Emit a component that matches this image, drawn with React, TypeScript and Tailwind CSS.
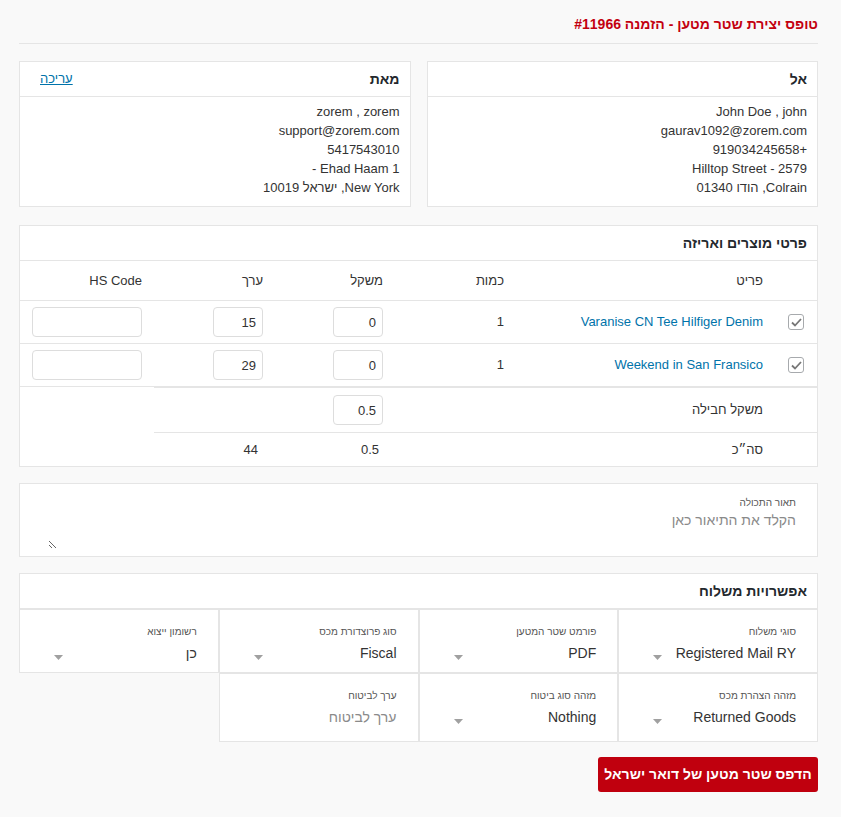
import React from 'react';

const Caret = () => (
  <svg width="9" height="5" viewBox="0 0 9 5" className="block">
    <path d="M0 0h9L4.5 5z" fill="#a0a0a0" />
  </svg>
);

const Check = () => (
  <span className="flex h-[16px] w-[16px] items-center justify-center rounded-[3px] border border-[#a7aaad] bg-white">
    <svg width="11" height="9" viewBox="0 0 11 9">
      <path d="M1 4.5l3 3L10 1" fill="none" stroke="#777" strokeWidth="1.8" />
    </svg>
  </span>
);

const Field = ({ value, className }: { value: string; className: string }) => (
  <input
    readOnly
    value={value}
    className={`h-[30px] rounded-[4px] border border-[#dddddd] bg-white pr-[6px] text-right text-[13px] text-[#333] outline-none ${className}`}
  />
);

const AddressCard = ({ title, lines, edit }: { title: string; lines: string[]; edit?: boolean }) => (
  <div className="border border-[#e5e5e5] bg-white">
    <div className="flex h-[35px] items-center justify-between border-b border-[#e5e5e5] pl-[20px] pr-[10px]">
      <span className="text-[14px] font-bold text-[#23282d]">{title}</span>
      {edit && <a className="text-[13px] text-[#0073aa] underline">עריכה</a>}
    </div>
    <div className="pb-[9px] pr-[10px] pt-[5px] text-[13px] leading-[19px] text-[#333]">
      {lines.map((l) => (
        <div key={l}>{l}</div>
      ))}
    </div>
  </div>
);

const OptionCell = ({
  label,
  value,
  placeholder = false,
  caret = true,
  tall = false,
}: {
  label: string;
  value: string;
  placeholder?: boolean;
  caret?: boolean;
  tall?: boolean;
}) => (
  <div className={`border border-[#e5e5e5] bg-white pl-[21px] pr-[21px] ${tall ? 'h-[69px]' : 'h-[64px]'}`}>
    <div className="pt-[16px] text-[10px] leading-[12px] text-[#555]">{label}</div>
    <div className="mt-[6px] flex items-center justify-between">
      <span className={`text-[14px] leading-[18px] ${placeholder ? 'text-[#8a8a8a]' : 'text-[#333]'}`}>{value}</span>
      {caret && (
        <span className="ml-[13px] mt-[8px]">
          <Caret />
        </span>
      )}
    </div>
  </div>
);

const cols = 'grid grid-cols-[42px_259px_121px_120px_121px_1fr]';

const ProductRow = ({ name, qty, weight, price }: { name: string; qty: string; weight: string; price: string }) => (
  <div className={`${cols} h-[43px] items-center border-b border-[#e5e5e5]`}>
    <div className="flex justify-center">
      <Check />
    </div>
    <div className="pr-[12px] text-[13px] text-[#0073aa]">{name}</div>
    <div className="pr-[12px] text-[13px]">{qty}</div>
    <div className="pr-[12px]">
      <Field value={weight} className="w-[50px]" />
    </div>
    <div className="pr-[12px]">
      <Field value={price} className="w-[50px]" />
    </div>
    <div className="pl-[12px] pr-[12px]">
      <Field value="" className="w-full" />
    </div>
  </div>
);

export default function App() {
  return (
    <div
      dir="rtl"
      className="min-h-[817px] bg-[#f9f9f9] pb-[24px] pl-[19px] pr-[23px] font-['Liberation_Sans',Arial,sans-serif] text-[#333]"
    >
      <h1 className="border-b border-[#e5e5e5] pb-[10px] pt-[15px] text-[14px] font-bold leading-[18px] text-[#c3000f]">
        טופס יצירת שטר מטען - הזמנה #11966
      </h1>

      <div className="mt-[17px] grid grid-cols-2 gap-[16px]">
        <AddressCard
          title="אל"
          lines={['John Doe , john', 'gaurav1092@zorem.com', '+919034245658', '2579 - Hilltop Street', 'Colrain, הודו 01340']}
        />
        <AddressCard
          title="מאת"
          edit
          lines={['zorem , zorem', 'support@zorem.com', '5417543010', 'Ehad Haam 1 -', 'New York, ישראל 10019']}
        />
      </div>

      <div className="mt-[18px] border border-[#e5e5e5] bg-white text-[13px]">
        <div className="flex h-[35px] items-center border-b border-[#e5e5e5] pr-[10px] text-[14px] font-bold text-[#23282d]">
          פרטי מוצרים ואריזה
        </div>
        <div className={`${cols} h-[40px] items-center border-b border-[#e5e5e5]`}>
          <div />
          <div className="pr-[12px]">פריט</div>
          <div className="pr-[12px]">כמות</div>
          <div className="pr-[12px]">משקל</div>
          <div className="pr-[12px]">ערך</div>
          <div className="pr-[12px]">HS Code</div>
        </div>
        <ProductRow name="Varanise CN Tee Hilfiger Denim" qty="1" weight="0" price="15" />
        <ProductRow name="Weekend in San Fransico" qty="1" weight="0" price="29" />
        <div className={`${cols} h-[46px] items-stretch`}>
          <div className="border-b border-t border-[#e5e5e5]" />
          <div className="flex items-center border-b border-t border-[#e5e5e5] pr-[12px]">משקל חבילה</div>
          <div className="border-b border-t border-[#e5e5e5]" />
          <div className="flex items-center border-b border-t border-[#e5e5e5] pr-[12px]">
            <Field value="0.5" className="w-[50px]" />
          </div>
          <div className="border-b border-t border-[#e5e5e5]" />
          <div />
        </div>
        <div className={`${cols} h-[33px] items-center`}>
          <div />
          <div className="pr-[12px]">סה״כ</div>
          <div />
          <div className="pr-[16px]">0.5</div>
          <div className="pr-[17px]">44</div>
          <div />
        </div>
      </div>

      <div className="mt-[16px] h-[74px] border border-[#e5e5e5] bg-white pl-[28px] pr-[21px] pt-[13px]">
        <div className="text-[10px] leading-[12px] text-[#555]">תאור התכולה</div>
        <textarea
          placeholder="הקלד את התיאור כאן"
          className="mt-[2px] block h-[38px] w-full resize-y bg-transparent text-[14px] leading-[18px] text-[#333] outline-none placeholder:text-[#8a8a8a]"
        />
      </div>

      <div className="mt-[16px]">
        <div className="flex h-[36px] items-center border border-[#e5e5e5] bg-white pr-[10px] text-[14px] font-bold text-[#23282d]">
          אפשרויות משלוח
        </div>
        <div className="grid grid-cols-4">
          <OptionCell label="סוגי משלוח" value="Registered Mail RY" />
          <OptionCell label="פורמט שטר המטען" value="PDF" />
          <OptionCell label="סוג פרוצדורת מכס" value="Fiscal" />
          <OptionCell label="רשומון ייצוא" value="כן" />
          <OptionCell label="מזהה הצהרת מכס" value="Returned Goods" tall />
          <OptionCell label="מזהה סוג ביטוח" value="Nothing" tall />
          <OptionCell label="ערך לביטוח" value="ערך לביטוח" placeholder caret={false} tall />
        </div>
      </div>

      <div className="mt-[15px] flex">
        <button className="h-[35px] w-[220px] rounded-[3px] bg-[#c0000e] text-[14px] font-bold text-white">
          הדפס שטר מטען של דואר ישראל
        </button>
      </div>
    </div>
  );
}
